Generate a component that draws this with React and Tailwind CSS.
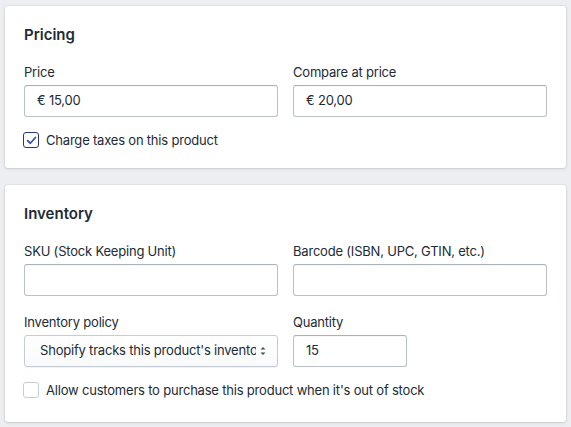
import React from "react";

const Field = ({ label, value, className = "" }) => (
  <div className={className}>
    <label className="block leading-5 mb-[3px]">{label}</label>
    <div className="h-8 rounded-[3px] border border-[#b8c0c8] border-t-[#a9b1b9] bg-white px-3 flex items-center shadow-[inset_0_1px_0_0_rgba(99,115,129,0.05)]">
      {value}
    </div>
  </div>
);

const Checkbox = ({ checked, label }) => (
  <label className="flex items-center gap-[7px] leading-5 -ml-px">
    {checked ? (
      <span className="w-4 h-4 rounded-[3px] border border-[#2c3578] bg-white flex items-center justify-center">
        <svg width="11" height="11" viewBox="0 0 10 10">
          <path d="M1.5 5.2 L4 7.5 L8.6 2.3" fill="none" stroke="#3f4eae" strokeWidth="1.6" strokeLinecap="round" strokeLinejoin="round" />
        </svg>
      </span>
    ) : (
      <span className="w-4 h-4 rounded-[3px] border border-[#c4cdd5] bg-white" />
    )}
    <span>{label}</span>
  </label>
);

const App = () => {
  return (
    <div className="min-h-screen bg-[#edeef1] px-[5px] pt-[6px] pb-2 font-['Inter',sans-serif] text-[13px] tracking-[-0.2px] text-[#212b36]">
      <section className="rounded-[3px] bg-white px-[19px] pt-[19px] pb-[18px] shadow-[0_0_0_1px_rgba(63,63,68,0.05),0_1px_3px_0_rgba(63,63,68,0.15)]">
        <h2 className="text-[15px] font-semibold leading-5 tracking-normal">Pricing</h2>
        <div className="mt-[17px] grid grid-cols-2 gap-[15px]">
          <Field label="Price" value="€ 15,00" />
          <Field label="Compare at price" value="€ 20,00" />
        </div>
        <div className="mt-[13px]">
          <Checkbox checked label="Charge taxes on this product" />
        </div>
      </section>

      <section className="mt-[17px] rounded-[3px] bg-white px-[19px] pt-[19px] pb-[22px] shadow-[0_0_0_1px_rgba(63,63,68,0.05),0_1px_3px_0_rgba(63,63,68,0.15)]">
        <h2 className="text-[15px] font-semibold leading-5 tracking-normal">Inventory</h2>
        <div className="mt-[17px] grid grid-cols-2 gap-x-[15px] gap-y-[16px]">
          <Field label="SKU (Stock Keeping Unit)" value="" />
          <Field label="Barcode (ISBN, UPC, GTIN, etc.)" value="" />
          <div>
            <label className="block leading-5 mb-[3px]">Inventory policy</label>
            <div className="h-8 rounded-[3px] border border-[#c4cdd5] bg-gradient-to-b from-white to-[#f9fafb] shadow-[0_1px_0_0_rgba(22,29,37,0.05)] flex items-center pl-[15px] pr-[9px]">
              <span className="flex-1 overflow-hidden whitespace-nowrap">Shopify tracks this product's inventory</span>
              <svg width="10" height="12" viewBox="0 0 10 12" className="ml-[2px] shrink-0">
                <path d="M2.5 4.5 L5 2 L7.5 4.5 Z" fill="#454f5b" />
                <path d="M2.5 7.5 L5 10 L7.5 7.5 Z" fill="#454f5b" />
              </svg>
            </div>
          </div>
          <Field label="Quantity" value="15" className="w-[114px]" />
        </div>
        <div className="mt-[13px]">
          <Checkbox label="Allow customers to purchase this product when it's out of stock" />
        </div>
      </section>
    </div>
  );
};

export default App;
